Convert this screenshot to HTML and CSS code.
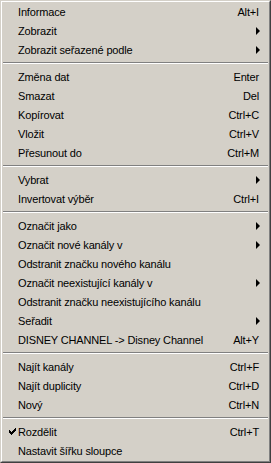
FILE: index.html
```html
<!DOCTYPE html>
<html lang="cs">
<head>
  <meta charset="UTF-8">
  <title>Menu</title>
  <link rel="stylesheet" href="styles.css">
</head>
<body>
  <div class="menu">
    <div class="menu-inner">
      <div class="item"><span class="label">Informace</span><span class="key">Alt+I</span></div>
      <div class="item"><span class="label">Zobrazit</span><span class="arrow"></span></div>
      <div class="item"><span class="label">Zobrazit seřazené podle</span><span class="arrow"></span></div>
      <div class="sep"></div>
      <div class="item"><span class="label">Změna dat</span><span class="key">Enter</span></div>
      <div class="item"><span class="label">Smazat</span><span class="key">Del</span></div>
      <div class="item"><span class="label">Kopírovat</span><span class="key">Ctrl+C</span></div>
      <div class="item"><span class="label">Vložit</span><span class="key">Ctrl+V</span></div>
      <div class="item"><span class="label">Přesunout do</span><span class="key">Ctrl+M</span></div>
      <div class="sep"></div>
      <div class="item"><span class="label">Vybrat</span><span class="arrow"></span></div>
      <div class="item"><span class="label">Invertovat výběr</span><span class="key">Ctrl+I</span></div>
      <div class="sep"></div>
      <div class="item"><span class="label">Označit jako</span><span class="arrow"></span></div>
      <div class="item"><span class="label">Označit nové kanály v</span><span class="arrow"></span></div>
      <div class="item"><span class="label">Odstranit značku nového kanálu</span></div>
      <div class="item"><span class="label">Označit neexistující kanály v</span><span class="arrow"></span></div>
      <div class="item"><span class="label">Odstranit značku neexistujícího kanálu</span></div>
      <div class="item"><span class="label">Seřadit</span><span class="arrow"></span></div>
      <div class="item"><span class="label">DISNEY CHANNEL -&gt; Disney Channel</span><span class="key">Alt+Y</span></div>
      <div class="sep"></div>
      <div class="item"><span class="label">Najít kanály</span><span class="key">Ctrl+F</span></div>
      <div class="item"><span class="label">Najít duplicity</span><span class="key">Ctrl+D</span></div>
      <div class="item"><span class="label">Nový</span><span class="key">Ctrl+N</span></div>
      <div class="sep"></div>
      <div class="item">
        <svg class="check" width="7" height="7" viewBox="0 0 7 7"><path d="M6 0h1v3H6v1H5v1H4v1H3v1H2V6H1V5H0V2h1v1h1v1h1V3h1V2h1V1h1z" fill="#000"/></svg>
        <span class="label">Rozdělit</span><span class="key">Ctrl+T</span>
      </div>
      <div class="item"><span class="label">Nastavit šířku sloupce</span></div>
    </div>
  </div>
</body>
</html>
```

FILE: styles.css
```css
body {
  margin: 0;
  background: #d4d0c8;
  font-family: "Liberation Sans", Arial, sans-serif;
  font-size: 11px;
  letter-spacing: -0.15px;
  color: #000;
}
.menu {
  width: 271px;
  height: 463px;
  box-sizing: border-box;
  border: 1px solid;
  border-color: #d4d0c8 #404040 #404040 #d4d0c8;
  background: #d4d0c8;
}
.menu-inner {
  height: 100%;
  box-sizing: border-box;
  border: 1px solid;
  border-color: #fff #808080 #808080 #fff;
  padding: 0 0 1px 0;
}
.item {
  position: relative;
  display: flex;
  align-items: center;
  height: 19px;
  padding: 0 8px 0 16px;
}
.label {
  flex: 1;
  white-space: nowrap;
}
.key {
  white-space: nowrap;
  margin-right: 2px;
}
.arrow {
  width: 0;
  height: 0;
  border-top: 4px solid transparent;
  border-bottom: 4px solid transparent;
  border-left: 4px solid #000;
  margin-right: 1px;
}
.check {
  position: absolute;
  left: 7px;
  top: 6px;
}
.sep {
  height: 8px;
  display: flex;
  flex-direction: column;
  justify-content: center;
  padding: 0 1px;
}
.sep::before {
  content: "";
  display: block;
  border-top: 1px solid #808080;
  border-bottom: 1px solid #fff;
}
```
